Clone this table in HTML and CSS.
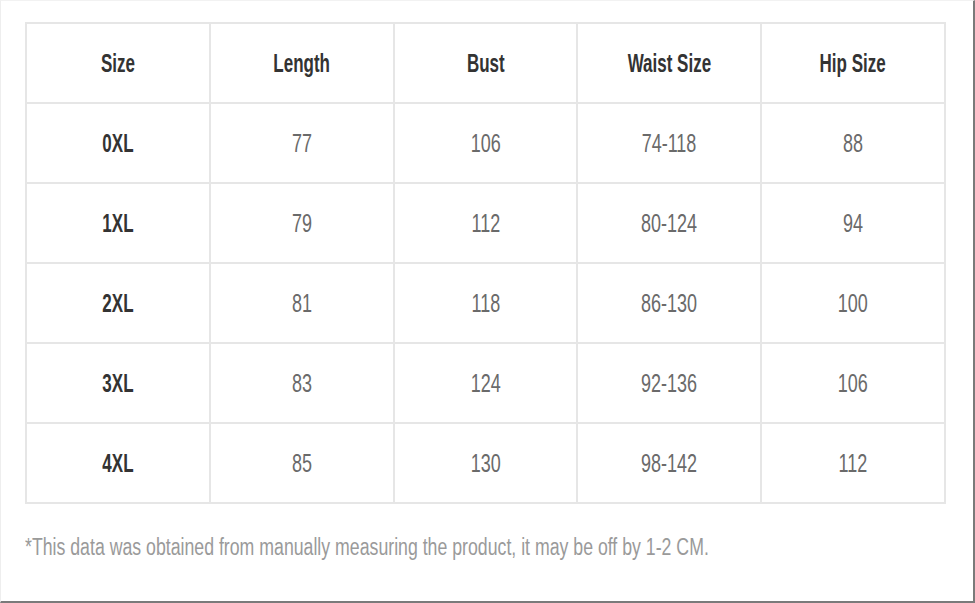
FILE: index.html
```html
<!DOCTYPE html>
<html>
<head>
<meta charset="utf-8">
<link rel="stylesheet" href="styles.css">
</head>
<body>
<div class="frame">
  <table class="sizes">
    <tr class="head"><td><span>Size</span></td><td><span>Length</span></td><td><span>Bust</span></td><td><span>Waist Size</span></td><td><span>Hip Size</span></td></tr>
    <tr><td class="sz"><span>0XL</span></td><td><span>77</span></td><td><span>106</span></td><td><span>74-118</span></td><td><span>88</span></td></tr>
    <tr><td class="sz"><span>1XL</span></td><td><span>79</span></td><td><span>112</span></td><td><span>80-124</span></td><td><span>94</span></td></tr>
    <tr><td class="sz"><span>2XL</span></td><td><span>81</span></td><td><span>118</span></td><td><span>86-130</span></td><td><span>100</span></td></tr>
    <tr><td class="sz"><span>3XL</span></td><td><span>83</span></td><td><span>124</span></td><td><span>92-136</span></td><td><span>106</span></td></tr>
    <tr><td class="sz"><span>4XL</span></td><td><span>85</span></td><td><span>130</span></td><td><span>98-142</span></td><td><span>112</span></td></tr>
  </table>
  <p class="note"><span>*This data was obtained from manually measuring the product, it may be off by 1-2 CM.</span></p>
</div>
</body>
</html>
```
FILE: styles.css
```css
html, body { margin: 0; padding: 0; background: #fff; }
.frame {
  box-sizing: border-box;
  width: 975px;
  height: 603px;
  border-top: 1px solid #f2f2f2;
  border-left: 1px solid #eeeeee;
  border-right: 2px solid #7a7a7a;
  border-bottom: 2px solid #7a7a7a;
  padding: 21px 0 0 24px;
  font-family: "Liberation Sans", Arial, sans-serif;
}
.sizes {
  border-collapse: collapse;
  width: 921px;
  table-layout: fixed;
}
.sizes td {
  border: 2px solid #e6e6e6;
  height: 78px;
  padding: 0;
  text-align: center;
  vertical-align: middle;
  font-size: 25px;
  color: #6a6a6a;
}
.sizes td span {
  display: inline-block;
  transform: scaleX(0.72);
  white-space: nowrap;
}
.sizes .head td, .sizes td.sz {
  font-weight: bold;
  color: #333;
}
.sizes .head td span, .sizes td.sz span {
  transform: scaleX(0.68);
}
.note {
  margin: 30px 0 0 0;
  font-size: 23px;
  color: #9a9a9a;
  white-space: nowrap;
}
.note span {
  display: inline-block;
  transform: scaleX(0.77);
  transform-origin: left center;
}
```
